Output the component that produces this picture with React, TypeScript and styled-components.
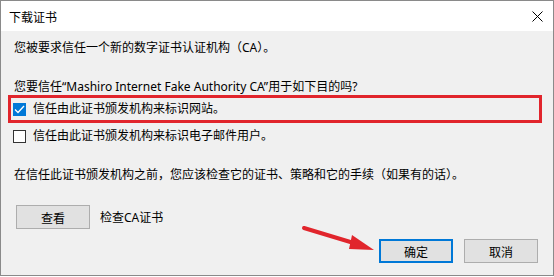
import React from "react";
import styled, { createGlobalStyle, css } from "styled-components";

const GlobalStyle = createGlobalStyle`
  html, body {
    margin: 0;
    padding: 0;
    background: #ffffff;
  }
  body {
    font-family: "Noto Sans", "Noto Sans CJK SC", sans-serif;
    font-size: 12px;
    color: #000;
  }
`;

const Dialog = styled.div`
  position: relative;
  width: 554px;
  height: 276px;
  box-sizing: border-box;
  border: 1px solid #8a8a8a;
  background: #f0f0f0;
  display: flex;
  flex-direction: column;
`;

const TitleBar = styled.div`
  height: 30px;
  background: #ffffff;
  display: flex;
  align-items: center;
  justify-content: space-between;
  padding: 0 9px 0 8px;
  font-family: "Noto Sans CJK SC", sans-serif;
  font-size: 12px;
`;

const CloseIcon = styled.svg`
  width: 11px;
  height: 11px;
  margin-right: 1px;
`;

const Body = styled.div`
  flex: 1;
  display: flex;
  flex-direction: column;
  padding: 9px 15px 0 13px;
`;

const Line = styled.div<{ gap?: number }>`
  line-height: 16px;
  height: 16px;
  white-space: nowrap;
  margin-top: ${({ gap }) => gap ?? 0}px;
`;

const Highlight = styled.div`
  margin-left: -6px;
  width: 534px;
  height: 28px;
  box-sizing: border-box;
  border: 3px solid #e1252c;
  display: flex;
  align-items: center;
  padding-left: 2px;
`;

const CheckRow = styled.label<{ gap?: number }>`
  display: flex;
  align-items: center;
  gap: 7px;
  height: 16px;
  line-height: 16px;
  margin-top: ${({ gap }) => gap ?? 0}px;
  margin-left: ${({ gap }) => (gap === undefined ? 0 : -1)}px;
`;

const Box = styled.span<{ checked?: boolean }>`
  width: 13px;
  height: 13px;
  box-sizing: border-box;
  display: flex;
  align-items: center;
  justify-content: center;
  ${({ checked }) =>
    checked
      ? css`
          background: #0078d7;
          border: 1px solid #0078d7;
        `
      : css`
          background: #ffffff;
          border: 1px solid #333333;
        `}
`;

const InspectRow = styled.div`
  display: flex;
  align-items: center;
  gap: 10px;
  margin-top: 22px;
  margin-left: 2px;
`;

const Button = styled.button<{ primary?: boolean }>`
  width: 74px;
  height: 24px;
  box-sizing: border-box;
  background: #e1e1e1;
  font-family: "Noto Sans CJK SC", sans-serif;
  font-size: 12px;
  color: #000;
  padding: 0;
  border: ${({ primary }) => (primary ? "2px solid #0078d7" : "1px solid #adadad")};
`;

const Footer = styled.div`
  display: flex;
  justify-content: flex-end;
  gap: 11px;
  margin-top: 10px;
`;

const Arrow = styled.svg`
  position: absolute;
  left: 298px;
  top: 222px;
  width: 80px;
  height: 34px;
`;

export default function App() {
  return (
    <>
      <GlobalStyle />
      <Dialog>
        <TitleBar>
          <span>下载证书</span>
          <CloseIcon viewBox="0 0 11 11">
            <path d="M0.5 0.5 L10.5 10.5 M10.5 0.5 L0.5 10.5" stroke="#000" strokeWidth="1" fill="none" />
          </CloseIcon>
        </TitleBar>
        <Body>
          <Line>您被要求信任一个新的数字证书认证机构（CA）。</Line>
          <Line gap={23}>您要信任“Mashiro Internet Fake Authority CA”用于如下目的吗?</Line>
          <Highlight>
            <CheckRow>
              <Box checked>
                <svg width="11" height="9" viewBox="0 0 11 9">
                  <path d="M1 4.5 L4 7.5 L10 1" stroke="#fff" strokeWidth="1.3" fill="none" />
                </svg>
              </Box>
              信任由此证书颁发机构来标识网站。
            </CheckRow>
          </Highlight>
          <CheckRow gap={5}>
            <Box />
            信任由此证书颁发机构来标识电子邮件用户。
          </CheckRow>
          <Line gap={23}>在信任此证书颁发机构之前，您应该检查它的证书、策略和它的手续（如果有的话）。</Line>
          <InspectRow>
            <Button>查看</Button>
            <span>检查CA证书</span>
          </InspectRow>
          <Footer>
            <Button primary>确定</Button>
            <Button>取消</Button>
          </Footer>
        </Body>
        <Arrow viewBox="0 0 80 34">
          <path d="M5 5 L58 21" stroke="#e1252c" strokeWidth="4" strokeLinecap="round" />
          <polygon points="75,27 53,12 50,26" fill="#e1252c" />
        </Arrow>
      </Dialog>
    </>
  );
}
